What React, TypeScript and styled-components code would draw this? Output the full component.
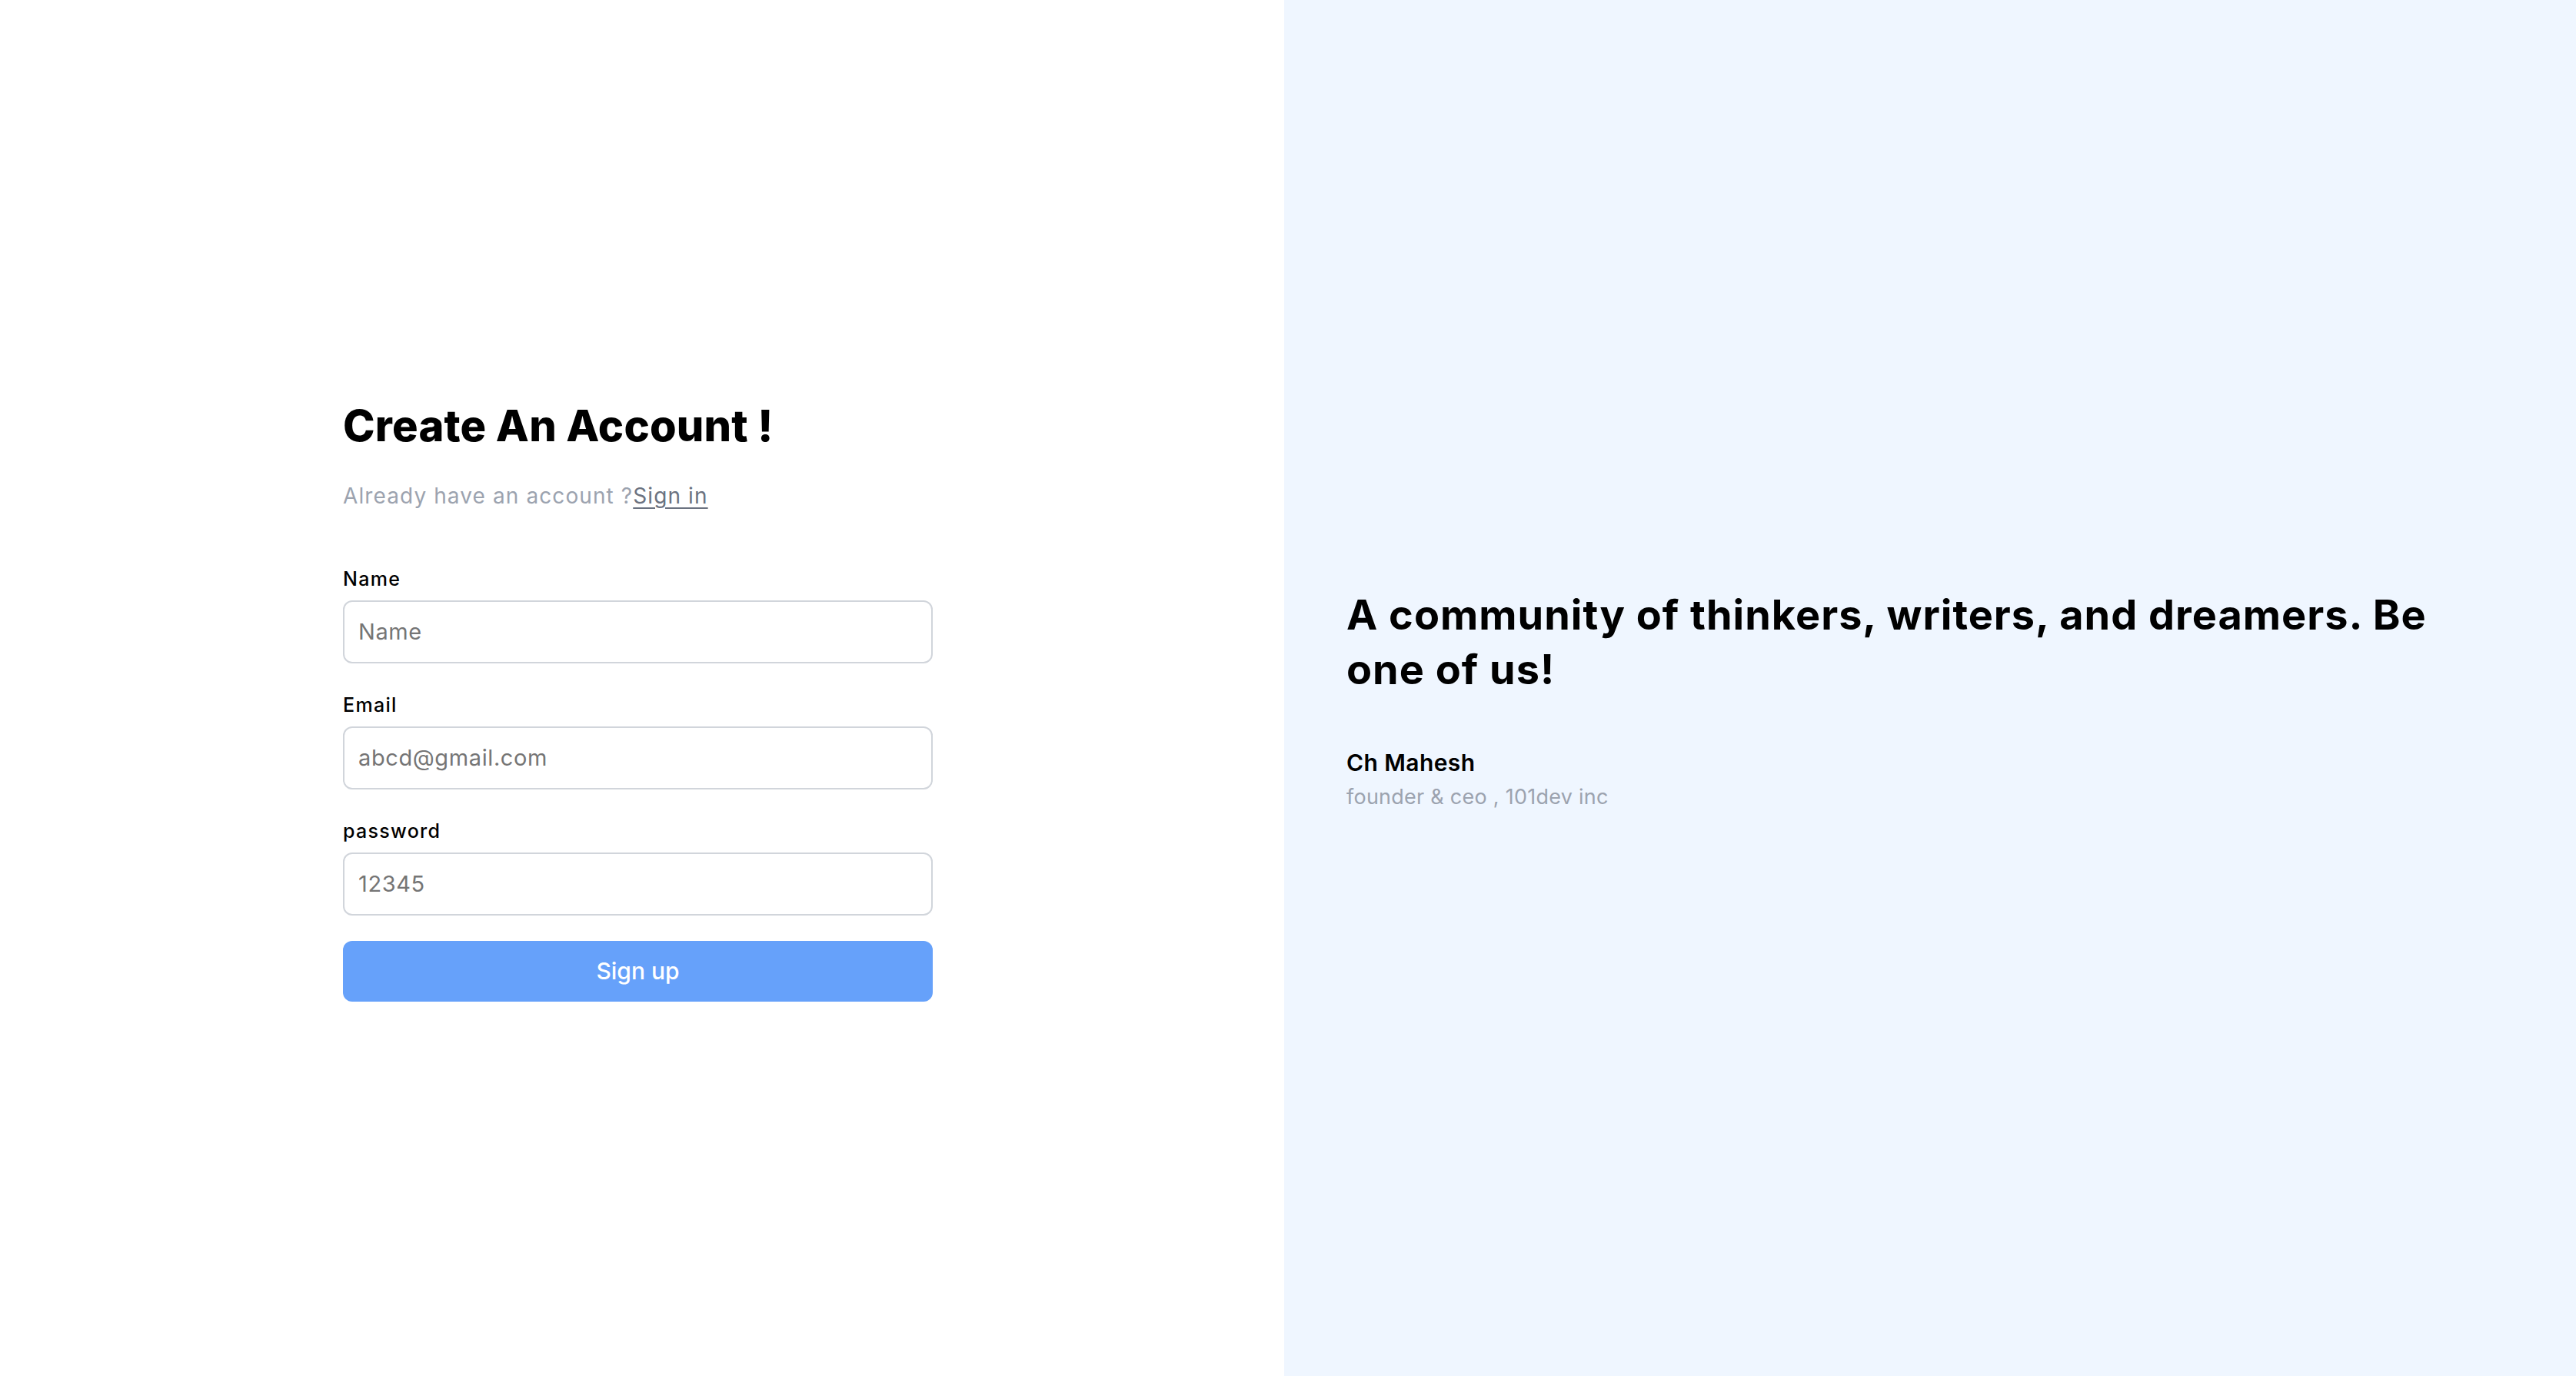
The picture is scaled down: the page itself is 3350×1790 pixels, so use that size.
import React from "react";
import styled, { createGlobalStyle } from "styled-components";

const GlobalStyle = createGlobalStyle`
  html, body { margin: 0; padding: 0; }
  body {
    font-family: Inter, "Noto Sans", "Liberation Sans", sans-serif;
    background: #ffffff;
    color: #000000;
  }
  * { box-sizing: border-box; }
`;

const Page = styled.div`
  display: grid;
  grid-template-columns: 1670px 1fr;
  width: 3350px;
  height: 1790px;
`;

const LeftPane = styled.section`
  display: flex;
  flex-direction: column;
  justify-content: center;
  align-items: center;
  padding: 32px 11px 0 0;
  background: #ffffff;
`;

const FormBox = styled.div`
  width: 767px;
  display: flex;
  flex-direction: column;
`;

const Title = styled.h1`
  margin: 0;
  font-size: 56px;
  line-height: 68px;
  font-weight: 800;
  letter-spacing: 0.2px;
  color: #000;
`;

const Subtitle = styled.p`
  margin: 37px 0 0;
  font-size: 28px;
  line-height: 40px;
  letter-spacing: 1.1px;
  color: #9ca3af;
`;

const SignInLink = styled.a`
  color: #6b7280;
  text-decoration: underline;
  text-underline-offset: 5px;
  text-decoration-thickness: 2px;
  cursor: pointer;
`;

const Fields = styled.div`
  margin-top: 72px;
  display: flex;
  flex-direction: column;
  gap: 38px;
`;

const Field = styled.label`
  display: flex;
  flex-direction: column;
  gap: 12px;
`;

const FieldLabel = styled.span`
  font-size: 25px;
  line-height: 32px;
  font-weight: 500;
  letter-spacing: 1.3px;
  color: #000;
`;

const Input = styled.input`
  width: 100%;
  height: 82px;
  padding: 0 18px;
  border: 2px solid #d1d5db;
  border-radius: 12px;
  font-family: inherit;
  font-size: 29px;
  letter-spacing: 0.6px;
  color: #111827;
  background: #fff;
  outline: none;
  &::placeholder { color: #757575; }
`;

const SubmitButton = styled.button`
  margin-top: 33px;
  width: 100%;
  height: 79px;
  border: none;
  border-radius: 12px;
  background: #66a1fa;
  color: #ffffff;
  font-family: inherit;
  font-size: 30px;
  font-weight: 500;
  cursor: pointer;
`;

const RightPane = styled.section`
  display: flex;
  flex-direction: column;
  justify-content: center;
  padding: 28px 77px 0 81px;
  background: #eff6ff;
`;

const Quote = styled.div`
  max-width: 1460px;
`;

const QuoteText = styled.h2`
  margin: 0;
  font-size: 54px;
  line-height: 71px;
  font-weight: 700;
  letter-spacing: 1px;
  color: #000;
`;

const Author = styled.div`
  margin-top: 66px;
  font-size: 30px;
  line-height: 40px;
  font-weight: 600;
  letter-spacing: 0.4px;
  color: #000;
`;

const Role = styled.div`
  margin-top: 7px;
  font-size: 27px;
  line-height: 36px;
  letter-spacing: 0.25px;
  color: #9ca3af;
`;

export default function App() {
  return (
    <>
      <GlobalStyle />
      <Page>
        <LeftPane>
          <FormBox>
            <Title>Create An Account !</Title>
            <Subtitle>
              Already have an account ?<SignInLink>Sign in</SignInLink>
            </Subtitle>
            <Fields>
              <Field>
                <FieldLabel>Name</FieldLabel>
                <Input type="text" placeholder="Name" />
              </Field>
              <Field>
                <FieldLabel>Email</FieldLabel>
                <Input type="email" placeholder="abcd@gmail.com" />
              </Field>
              <Field>
                <FieldLabel>password</FieldLabel>
                <Input type="password" placeholder="12345" />
              </Field>
            </Fields>
            <SubmitButton type="button">Sign up</SubmitButton>
          </FormBox>
        </LeftPane>
        <RightPane>
          <Quote>
            <QuoteText>
              A community of thinkers, writers, and dreamers. Be one of us!
            </QuoteText>
            <Author>Ch Mahesh</Author>
            <Role>founder &amp; ceo , 101dev inc</Role>
          </Quote>
        </RightPane>
      </Page>
    </>
  );
}
